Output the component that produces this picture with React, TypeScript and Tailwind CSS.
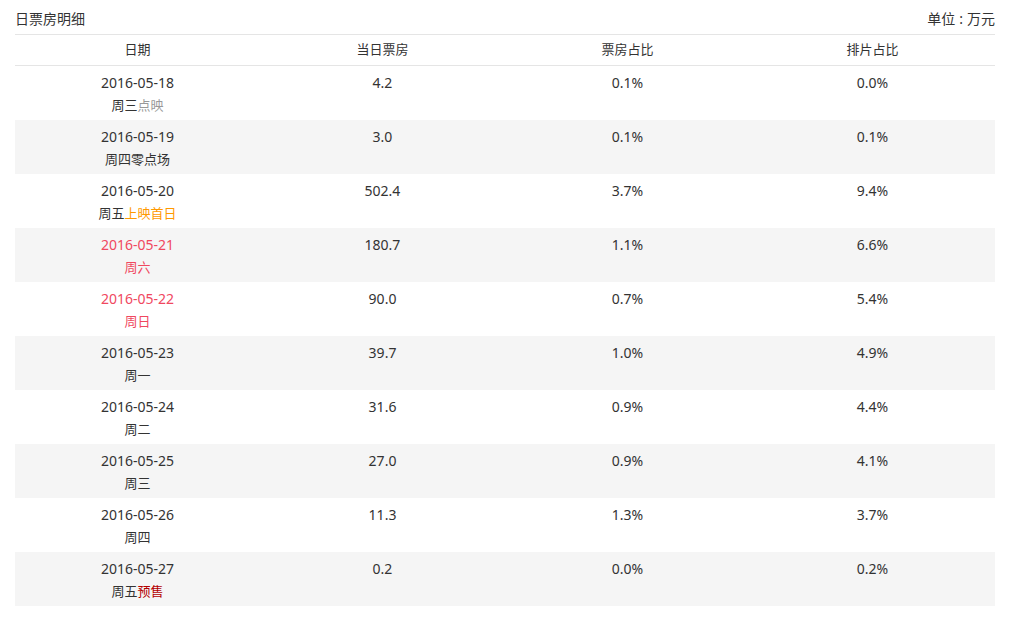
import React from 'react';

interface DayRow {
  date: string;
  week: string;
  tag?: string;
  tagColor?: string;
  weekend?: boolean;
  boxOffice: string;
  boxRate: string;
  showRate: string;
}

const rows: DayRow[] = [
  { date: '2016-05-18', week: '周三', tag: '点映', tagColor: 'text-[#999999]', boxOffice: '4.2', boxRate: '0.1%', showRate: '0.0%' },
  { date: '2016-05-19', week: '周四', tag: '零点场', tagColor: 'text-[#333333]', boxOffice: '3.0', boxRate: '0.1%', showRate: '0.1%' },
  { date: '2016-05-20', week: '周五', tag: '上映首日', tagColor: 'text-[#ff9900]', boxOffice: '502.4', boxRate: '3.7%', showRate: '9.4%' },
  { date: '2016-05-21', week: '周六', weekend: true, boxOffice: '180.7', boxRate: '1.1%', showRate: '6.6%' },
  { date: '2016-05-22', week: '周日', weekend: true, boxOffice: '90.0', boxRate: '0.7%', showRate: '5.4%' },
  { date: '2016-05-23', week: '周一', boxOffice: '39.7', boxRate: '1.0%', showRate: '4.9%' },
  { date: '2016-05-24', week: '周二', boxOffice: '31.6', boxRate: '0.9%', showRate: '4.4%' },
  { date: '2016-05-25', week: '周三', boxOffice: '27.0', boxRate: '0.9%', showRate: '4.1%' },
  { date: '2016-05-26', week: '周四', boxOffice: '11.3', boxRate: '1.3%', showRate: '3.7%' },
  { date: '2016-05-27', week: '周五', tag: '预售', tagColor: 'text-[#b30000]', boxOffice: '0.2', boxRate: '0.0%', showRate: '0.2%' },
];

const headers = ['日期', '当日票房', '票房占比', '排片占比'];

export default function App() {
  return (
    <div
      className="w-[1010px] h-[619px] bg-white px-[15px] text-[14px] text-[#333333]"
      style={{ fontFamily: '"Noto Sans", "Noto Sans CJK SC", sans-serif' }}
    >
      {/* Title bar */}
      <div className="flex items-center justify-between h-[35px] border-b border-[#e5e5e5] pt-[3px]">
        <span className="text-[14px]">日票房明细</span>
        <span className="text-[14px]">单位<span className="px-[4px]">:</span>万元</span>
      </div>

      {/* Header */}
      <div className="grid grid-cols-4 h-[31px] items-center border-b border-[#e5e5e5] text-[13px]">
        {headers.map((h) => (
          <div key={h} className="text-center">{h}</div>
        ))}
      </div>

      {/* Rows */}
      {rows.map((r, i) => (
        <div
          key={r.date}
          className={`grid grid-cols-4 h-[54px] pt-[6px] leading-[22px] ${i % 2 === 1 ? 'bg-[#f5f5f5]' : 'bg-white'}`}
        >
          <div className={`text-center ${r.weekend ? 'text-[#f0485f]' : ''}`}>
            <div>{r.date}</div>
            <div className="text-[13px]">
              {r.week}
              {r.tag && <span className={r.tagColor}>{r.tag}</span>}
            </div>
          </div>
          <div className="text-center">{r.boxOffice}</div>
          <div className="text-center">{r.boxRate}</div>
          <div className="text-center">{r.showRate}</div>
        </div>
      ))}
    </div>
  );
}
